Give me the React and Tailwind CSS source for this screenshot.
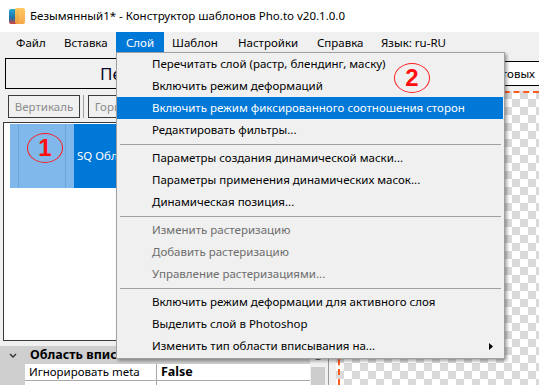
import React from 'react';

const menuBar = [
  { label: 'Файл', cls: 'ml-[6px] w-[48px] pl-[10px]' },
  { label: 'Вставка', cls: 'w-[62px] pl-[10px]' },
  { label: 'Слой', cls: 'w-[48px] pl-[10px] bg-[#0078d7] text-white', open: true },
  { label: 'Шаблон', cls: 'w-[65px] pl-[8px]' },
  { label: 'Настройки', cls: 'w-[78px] pl-[9px]' },
  { label: 'Справка', cls: 'w-[64px] pl-[10px]' },
  { label: 'Язык: ru-RU', cls: 'pl-[10px]' },
];

const layerMenu = [
  { label: 'Перечитать слой (растр, блендинг, маску)' },
  { label: 'Включить режим деформаций' },
  { label: 'Включить режим фиксированного соотношения сторон', active: true },
  { label: 'Редактировать фильтры...' },
  { sep: true },
  { label: 'Параметры создания динамической маски...' },
  { label: 'Параметры применения динамических масок...' },
  { label: 'Динамическая позиция...' },
  { sep: true },
  { label: 'Изменить растеризацию', disabled: true },
  { label: 'Добавить растеризацию', disabled: true },
  { label: 'Управление растеризациями...', disabled: true },
  { sep: true },
  { label: 'Включить режим деформации для активного слоя' },
  { label: 'Выделить слой в Photoshop' },
  { label: 'Изменить тип области вписывания на...', sub: true },
];

// small app icon in the title bar
const AppIcon = () => (
  <div className="relative w-[16px] h-[16px] shrink-0">
    <div className="absolute left-0 top-[1px] w-[10px] h-[15px] rounded-[2px] bg-[linear-gradient(180deg,#2aa7d8_0%,#1f6fa8_60%,#d8443a_100%)]" />
    <div className="absolute right-0 top-0 w-[10px] h-[16px] rounded-[2px] bg-[linear-gradient(180deg,#ffc457_0%,#f5a341_100%)] opacity-95" />
  </div>
);

// red hand-drawn marker
const Marker = ({ n, className }) => (
  <div className={`absolute w-[36px] h-[30px] rounded-[50%] border-[1.5px] border-[#ff1a1a] flex items-center justify-center text-[#ff1010] text-[24px] font-bold font-['Liberation_Sans',Arial,sans-serif] leading-none ${className}`}>
    {n}
  </div>
);

export default function App() {
  return (
    <div className="relative w-[539px] h-[385px] overflow-hidden bg-[#f0f0f0] text-[11.5px] text-black font-['Noto_Sans','Open_Sans',sans-serif]">
      {/* Title bar */}
      <div className="h-[32px] bg-white flex items-center pl-[9px]">
        <AppIcon />
        <span className="ml-[5px] leading-none">Безымянный1* - Конструктор шаблонов Pho.to v20.1.0.0</span>
      </div>

      {/* Menu bar */}
      <div className="h-[21px] flex bg-[#f0f0f0]">
        {menuBar.map(m => (
          <div key={m.label} className={`h-full flex items-center leading-none shrink-0 ${m.cls}`}>
            {m.label}
          </div>
        ))}
      </div>

      {/* Workspace */}
      <div className="flex h-[332px]">
        {/* Left panel */}
        <div className="w-[326px] shrink-0 flex flex-col">
          <div className="mt-[5px] ml-[5px] mr-[4px] h-[31px] border border-black flex items-center pl-[94px] text-[17px] text-[#0a0a2a]">
            Перечитать все слои
          </div>

          <div className="mt-[6px] h-[23px] flex items-stretch text-[#8c8c8c]">
            <div className="ml-[8px] w-[72px] border border-[#3c3c3c] flex items-center justify-center">Вертикаль</div>
            <div className="ml-[3px] w-px bg-[#a0a0a0]" />
            <div className="ml-[4px] w-[84px] border border-[#3c3c3c] flex items-center justify-center">Горизонталь</div>
          </div>

          <div className="mt-[4px] ml-[3px] mr-[2px] h-[219px] bg-white border border-[#3a3a3a] pt-px">
            <div className="ml-[6px] h-[64px] flex">
              <div className="w-[9px] bg-[#80b8ec] border-r border-[#6aa5dc]" />
              <div className="w-[47px] bg-[#80b8ec] border-r border-[#6aa5dc]" />
              <div className="w-[8px] bg-[#80b8ec]" />
              <div className="flex-1 bg-[#0078d7] text-white flex items-center pl-[3px]">SQ Область вписывания</div>
            </div>
          </div>

          {/* Property grid */}
          <div className="mt-[5px] flex-1 flex">
            <div className="w-[310px] flex flex-col">
              <div className="h-[18px] bg-[#cfcfcf] flex items-center">
                <svg width="25" height="18" viewBox="0 0 25 18" className="shrink-0">
                  <path d="M10 8 L13 11 L16 8" fill="none" stroke="#333" strokeWidth="1.4" />
                </svg>
                <span className="font-bold text-[12.5px] leading-none ml-[5px]">Область вписывания</span>
              </div>
              <div className="h-[17px] flex bg-[#cfcfcf]">
                <div className="w-[25px]" />
                <div className="w-[132px] bg-white border-r border-b border-[#a8a8a8] flex items-center pl-[4px] leading-none">Игнорировать meta</div>
                <div className="flex-1 bg-white border-b border-[#a8a8a8] flex items-center pl-[4px] font-bold text-[12.5px] leading-none">False</div>
              </div>
              <div className="flex-1 flex bg-[#cfcfcf]">
                <div className="w-[25px]" />
                <div className="w-[132px] bg-white border-r border-[#a8a8a8]" />
                <div className="flex-1 bg-white" />
              </div>
            </div>
            <div className="w-[16px] flex flex-col bg-[#f0f0f0]">
              <div className="h-[21px] flex items-center justify-center text-[#606060] text-[9px] leading-none">▲</div>
              <div className="flex-1 mx-[1px] bg-[#cdcdcd]" />
            </div>
          </div>
        </div>

        {/* Splitter */}
        <div className="w-[10px] shrink-0 flex">
          <div className="ml-[2px] w-px bg-[#9a9a9a]" />
        </div>

        {/* Right panel */}
        <div className="flex-1 flex flex-col">
          <div className="mt-[8px] ml-[4px] h-[25px] bg-white border-y border-l border-black flex items-center justify-end pr-[4px] whitespace-nowrap overflow-hidden">
            Показывать рамки текстовых
          </div>
          <div className="mt-[5px] flex-1 bg-[image:conic-gradient(#dadada_25%,#ffffff_0_50%,#dadada_0_75%,#ffffff_0)] bg-[length:16px_16px]">
            <div className="ml-[2px] h-full border-t-2 border-l-2 border-dashed border-[#ff5a1f]" />
          </div>
        </div>
      </div>

      {/* Open "Слой" dropdown */}
      <div className="absolute left-[116px] top-[52px] w-[389px] bg-[#f0f0f0] border border-[#a0a0a0] shadow-[2px_2px_3px_rgba(0,0,0,0.35)] pb-px">
        {layerMenu.map((item, i) =>
          item.sep ? (
            <div key={i} className="h-[6px] flex items-center">
              <div className="ml-[3px] mr-[3px] flex-1 h-px bg-[#a0a0a0]" />
            </div>
          ) : (
            <div
              key={i}
              className={`relative h-[22px] flex items-center pl-[35px] leading-none whitespace-nowrap ${
                item.active ? 'bg-[#0078d7] text-white mr-px' : item.disabled ? 'text-[#6d6d6d]' : ''
              }`}
            >
              {item.label}
              {item.sub && (
                <svg width="4" height="7" viewBox="0 0 4 7" className="absolute right-[11px] top-[8px]">
                  <polygon points="0,0 4,3.5 0,7" fill="#000" />
                </svg>
              )}
            </div>
          )
        )}
      </div>

      <Marker n="1" className="left-[27px] top-[133px]" />
      <Marker n="2" className="left-[394px] top-[63px]" />
    </div>
  );
}
